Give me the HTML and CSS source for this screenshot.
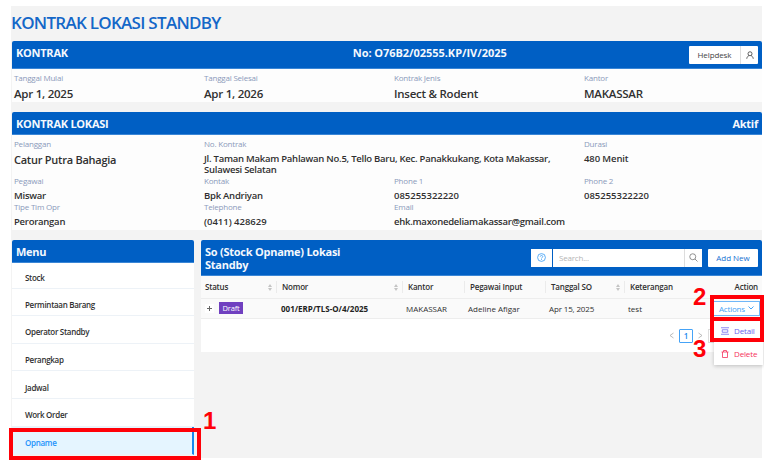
FILE: index.html
```html
<!DOCTYPE html>
<html lang="id">
<head>
<meta charset="utf-8">
<title>Kontrak Lokasi Standby</title>
<link rel="stylesheet" href="styles.css">
</head>
<body>
<main class="page">
  <h1 class="title">KONTRAK LOKASI STANDBY</h1>

  <section class="card contract">
    <header class="bar">
      <span class="bar-title caps">KONTRAK</span>
      <span class="bar-center">No: O76B2/02555.KP/IV/2025</span>
      <div class="help"><span class="help-text">Helpdesk</span><span class="help-icon"><svg width="8" height="8" viewBox="0 0 16 16" fill="none" stroke="#444" stroke-width="1.7"><circle cx="8" cy="5.5" r="4"/><path d="M1.5 15.5c.4-3.600 2.500-5.500 4.500-6.300M14.500 15.500c-.4-3.600-2.500-5.500-4.500-6.300"/></svg></span></div>
    </header>
    <div class="fields big">
      <div><p class="label">Tanggal Mulai</p><p class="value">Apr 1, 2025</p></div>
      <div><p class="label">Tanggal Selesai</p><p class="value">Apr 1, 2026</p></div>
      <div><p class="label">Kontrak Jenis</p><p class="value">Insect &amp; Rodent</p></div>
      <div><p class="label">Kantor</p><p class="value">MAKASSAR</p></div>
    </div>
  </section>

  <section class="card location">
    <header class="bar">
      <span class="bar-title caps">KONTRAK LOKASI</span>
      <span class="bar-title">Aktif</span>
    </header>
    <div class="fields details">
      <div><p class="label">Pelanggan</p><p class="value name">Catur Putra Bahagia</p></div>
      <div class="wide"><p class="label">No. Kontrak</p><p class="value address">Jl. Taman Makam Pahlawan No.5, Tello Baru, Kec. Panakkukang, Kota Makassar,<br>Sulawesi Selatan</p></div>
      <div><p class="label">Durasi</p><p class="value duration">480 Menit</p></div>
      <div><p class="label">Pegawai</p><p class="value">Miswar</p></div>
      <div><p class="label">Kontak</p><p class="value">Bpk Andriyan</p></div>
      <div><p class="label">Phone 1</p><p class="value num">085255322220</p></div>
      <div><p class="label">Phone 2</p><p class="value num">085255322220</p></div>
      <div><p class="label">Tipe Tim Opr</p><p class="value">Perorangan</p></div>
      <div><p class="label">Telephone</p><p class="value num">(0411) 428629</p></div>
      <div><p class="label">Email</p><p class="value">ehk.maxonedeliamakassar@gmail.com</p></div>
    </div>
  </section>

  <div class="columns">
    <nav class="card menu">
      <header class="bar"><span class="bar-title">Menu</span></header>
      <a class="item first">Stock</a>
      <a class="item">Permintaan Barang</a>
      <a class="item">Operator Standby</a>
      <a class="item">Perangkap</a>
      <a class="item">Jadwal</a>
      <a class="item">Work Order</a>
      <a class="item active">Opname</a>
    </nav>

    <section class="card stock">
      <header class="bar tall">
        <span class="bar-title">So (Stock Opname) Lokasi<br>Standby</span>
        <div class="tools">
          <span class="q"><svg width="9" height="9" viewBox="0 0 18 18" fill="none" stroke="#359bf5" stroke-width="1.6"><circle cx="9" cy="9" r="7.800"/><path d="M6.500 7.300c0-3.200 5-3.200 5 0 0 1.800-2.500 1.800-2.500 3.700M9 12.300v1.700"/></svg></span>
          <span class="search">Search...</span>
          <span class="lens"><svg width="9" height="9" viewBox="0 0 18 18" fill="none" stroke="#777" stroke-width="1.600"><circle cx="7.500" cy="7.500" r="6"/><path d="M12 12l5 5"/></svg></span>
          <span class="add">Add New</span>
        </div>
      </header>
      <div class="row head">
        <span class="sortable">Status<i class="sort"></i></span>
        <span class="sortable">Nomor<i class="sort"></i></span>
        <span>Kantor</span>
        <span>Pegawai Input</span>
        <span class="sortable">Tanggal SO<i class="sort"></i></span>
        <span>Keterangan</span>
        <span class="right">Action</span>
      </div>
      <div class="row data">
        <span class="status"><b class="plus"></b><em class="tag">Draft</em></span>
        <span class="number">001/ERP/TLS-O/4/2025</span>
        <span class="office">MAKASSAR</span>
        <span>Adeline Afigar</span>
        <span class="date">Apr 15, 2025</span>
        <span>test</span>
        <span class="action-cell"><span class="actions">Actions<svg width="6" height="4" viewBox="0 0 12 8" fill="none" stroke="#45a3f7" stroke-width="2"><path d="M1 1l5 5 5-5"/></svg></span></span>
      </div>
      <div class="pager">
        <svg width="5" height="7" viewBox="0 0 10 14" fill="none" stroke="#aaa" stroke-width="1.600"><path d="M9 2L2 7l7 5"/></svg>
        <span class="current">1</span>
        <svg width="5" height="7" viewBox="0 0 10 14" fill="none" stroke="#aaa" stroke-width="1.600"><path d="M1 2l7 5-7 5"/></svg>
        <span class="size"></span>
      </div>
    </section>
  </div>
</main>

<div class="dropdown">
  <span class="option detail"><svg width="8" height="8" viewBox="0 0 16 16" fill="none" stroke="#6a63ee" stroke-width="1.500"><path d="M0 1.500h16M0 14.500h16M2.500 5.500h11v5h-11z"/></svg>Detail</span>
  <span class="option delete"><svg width="8" height="8" viewBox="0 0 16 16" fill="none" stroke="#f5325c" stroke-width="1.600"><path d="M1 4h14M5 4V1h6v3M3 4v11h10V4"/></svg>Delete</span>
</div>

<div class="frame frame-menu"></div>
<div class="frame frame-actions"></div>
<div class="frame frame-detail"></div>
<span class="step step-1">1</span>
<span class="step step-2">2</span>
<span class="step step-3">3</span>
</body>
</html>
```
FILE: styles.css
```css
* { box-sizing: border-box; }
body {
  margin: 0;
  width: 764px;
  height: 462px;
  overflow: hidden;
  background: #fff;
  color: #303030;
  font-family: "Open Sans", "Noto Sans", sans-serif;
  font-size: 8px;
}
p, h1 { margin: 0; }
svg { display: block; flex: none; }
.page {
  margin: 6px 2px 0 11px;
  height: 452px;
  padding-left: 1px;
  background: #f3f3f3;
}
.title {
  height: 35px;
  margin-left: -1px;
  line-height: 34px;
  font-size: 17px;
  font-weight: 600;
  color: #1467c8;
  letter-spacing: -0.72px;
}
.card { background: #fdfdfd; width: 750px; border-radius: 2px 2px 0 0; }
.bar {
  display: flex;
  align-items: center;
  justify-content: space-between;
  height: 23px;
  padding: 0 4px;
  background: #005fc4;
  border-bottom: 1px solid #3a86d6;
  border-radius: 2px 2px 0 0;
  color: #f4f8fd;
  font-size: 11px;
  line-height: 13px;
  font-weight: 700;
  letter-spacing: -0.25px;
}
.contract { height: 61px; margin-bottom: 10px; }
.contract .bar { height: 28px; padding-bottom: 4px; }
.bar-center { flex: 1; padding-left: 285px; letter-spacing: -0.05px; }
.help {
  display: flex;
  align-items: center;
  width: 69px;
  height: 18px;
  margin: 4px 0 0;
  border-radius: 1px;
  background: #fff;
  color: #444;
  font-size: 8px;
  font-weight: 400;
  letter-spacing: -0.1px;
}
.help-text { width: 51px; text-align: center; }
.help-icon {
  display: grid;
  place-items: center;
  width: 18px;
  height: 18px;
  border-left: 1px solid #ddd;
}
.fields {
  display: grid;
  grid-template-columns: 190px 190px 190px 178px;
  padding-left: 2px;
}
.wide { grid-column: span 2; }
.label { color: #8b9abb; font-size: 8px; line-height: 12px; letter-spacing: -0.2px; }
.value { font-size: 9.5px; line-height: 14px; font-weight: 600; white-space: nowrap; letter-spacing: -0.25px; }
.num { letter-spacing: -0.02px; }
.big { padding-top: 3px; }
.big .value { font-size: 11.5px; line-height: 20px; }
.location { height: 118px; margin-bottom: 10px; }
.details { grid-template-rows: 37px 26px 26px; padding-top: 3px; }
.details .label { height: 11px; }
.details .value { line-height: 20px; }
.details .name { font-size: 11px; line-height: 22px; }
.details .address { line-height: 11px; padding-top: 4px; }
.details .duration { letter-spacing: -0.1px; line-height: 19px; }
.columns { display: flex; align-items: flex-start; gap: 7px; }
.menu { width: 182px; background: #fff; }
.item {
  display: flex;
  align-items: center;
  height: 27.600px;
  padding: 5px 0 0 13px;
  border-bottom: 1px solid #edf2f7;
  font-weight: 600;
  letter-spacing: -0.3px;
}
.first { height: 25.600px; }
.active {
  height: 28px;
  padding-top: 4px;
  background: #e5f5ff;
  color: #2393fb;
  border-right: 2px solid #1688ee;
}
.stock { width: 561px; height: 112px; background: #fff; }
.tall { height: 36px; }
.tools { display: flex; height: 18px; color: #1671d2; font-weight: 400; font-size: 8px; line-height: 18px; letter-spacing: 0; }
.tools > span { background: #fff; }
.tools .q { width: 21px; margin-right: 1px; display: grid; place-items: center; }
.tools .search { width: 131px; padding-left: 6px; color: #b5b5b5; letter-spacing: -0.2px; }
.tools .lens { width: 18px; display: grid; place-items: center; border-left: 1px solid #ddd; margin-right: 6px; }
.tools .add { width: 50px; text-align: center; border-radius: 1px; }
.row {
  display: grid;
  grid-template-columns: 75px 126px 62px 81px 79px 84px 54px;
  align-items: center;
  height: 23px;
  background: #fafafa;
  border-bottom: 1px solid #ededed;
}
.head { font-weight: 600; letter-spacing: -0.2px; }
.head > span { padding-left: 5px; height: 12px; line-height: 12px; border-left: 1px solid #ebebeb; }
.head > span:first-child { border-left: 0; padding-left: 4px; }
.head .right { text-align: right; padding: 0 4px 0 0; border: 0; }
.head .sortable { display: flex; justify-content: space-between; align-items: center; padding-right: 4px; }
.sort { display: flex; flex-direction: column; gap: 1px; }
.sort::before, .sort::after { content: ""; border: 2px solid transparent; }
.sort::before { border-top: 0; border-bottom: 3px solid #c4c4c4; }
.sort::after { border-bottom: 0; border-top: 3px solid #c4c4c4; }
.data { height: 20px; padding-bottom: 1px; line-height: 11px; }
.data > span { padding-left: 4px; }
.data > .status { display: flex; align-items: center; }
.data > .number { padding-left: 5px; }
.plus {
  width: 9px;
  height: 9px;
  background: linear-gradient(#666, #666) center / 5px 1px no-repeat, linear-gradient(#666, #666) center / 1px 5px no-repeat, #fff;
}
.tag {
  margin-left: 5px;
  width: 24px;
  height: 12px;
  background: #7040c0;
  color: #fff;
  line-height: 12px;
  font-style: normal;
  font-size: 7.500px;
  letter-spacing: -0.2px;
  text-align: center;
}
.number { font-weight: 700; color: #222; }
.date { letter-spacing: -0.15px; }
.data > .action-cell { display: flex; justify-content: flex-end; padding: 0 2px 0 0; }
.actions {
  display: flex;
  align-items: center;
  justify-content: space-between;
  width: 47px;
  height: 15px;
  padding: 0 5px 0 5px;
  border: 1px solid #70b7f8;
  background: #fff;
  color: #45a3f7;
  letter-spacing: -0.2px;
}
.pager { display: flex; align-items: center; gap: 5px; height: 33px; padding-left: 468px; }
.current {
  width: 14px;
  height: 14px;
  border: 1px solid #45a3f7;
  border-radius: 1px;
  color: #1688ee;
  font-weight: 600;
  line-height: 12px;
  text-align: center;
}
.size { width: 40px; height: 14px; border: 1px solid #ddd; }
.dropdown {
  position: absolute;
  left: 714px;
  top: 319px;
  width: 49px;
  height: 46px;
  background: #fff;
  box-shadow: 0 1px 4px rgba(0, 0, 0, 0.22);
}
.option { display: flex; align-items: center; gap: 5px; height: 23px; padding-left: 7px; letter-spacing: -0.15px; }
.detail { color: #6a63ee; }
.delete { color: #f5325c; }
.frame { position: absolute; border: 4px solid #ff0008; }
.frame-menu { left: 9px; top: 428px; width: 192px; height: 32px; }
.frame-actions { left: 710px; top: 295px; width: 54px; height: 26px; }
.frame-detail { left: 710px; top: 317px; width: 54px; height: 25px; }
.step {
  position: absolute;
  color: #ff0008;
  font: 700 24px/24px "Liberation Sans", sans-serif;
}
.step-1 { left: 203px; top: 409px; }
.step-2 { left: 693px; top: 285px; }
.step-3 { left: 693px; top: 337px; }
```
